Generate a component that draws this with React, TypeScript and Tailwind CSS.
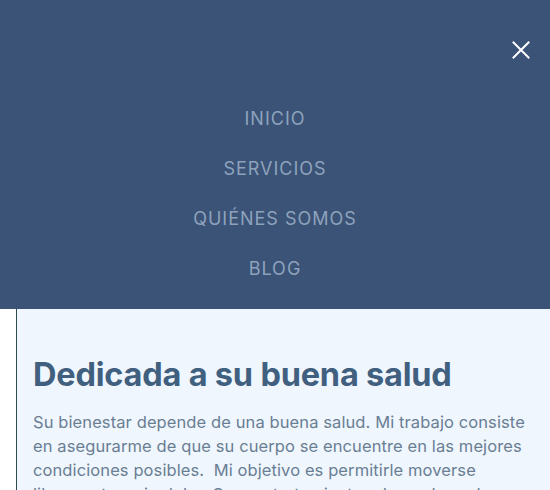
const links = ['INICIO', 'SERVICIOS', 'QUIÉNES SOMOS', 'BLOG'];

export default function App() {
  return (
    <div className="relative h-[490px] w-[550px] overflow-hidden bg-white font-['Inter',sans-serif]">
      {/* page content behind the menu */}
      <div className="ml-4 h-full border-l border-[#2f4a4c] bg-[#eff6fd] pt-[355px] pl-4 pr-4">
        <h1 className="text-[32.5px] leading-[40px] font-bold tracking-[-0.2px] text-[#41607f]">
          Dedicada a su buena salud
        </h1>
        <p className="mt-[15px] text-[16.5px] leading-[24px] tracking-[0.1px] text-[#6a7e94]">
          Su bienestar depende de una buena salud. Mi trabajo consiste en asegurarme de que su cuerpo se encuentre en las mejores condiciones posibles.&nbsp; Mi objetivo es permitirle moverse libremente y sin dolor. Con un tratamiento adecuado podemos lograrlo.
        </p>
      </div>

      {/* mobile menu overlay */}
      <nav className="absolute inset-x-0 top-0 h-[309px] bg-[#3a5377]">
        <button className="absolute right-[20px] top-[41px] text-white">
          <svg width="18" height="18" viewBox="0 0 18 18" fill="none" stroke="currentColor" strokeWidth="2" strokeLinecap="square">
            <path d="M1.5 1.5 16.5 16.5M16.5 1.5 1.5 16.5" />
          </svg>
        </button>
        <ul className="flex flex-col items-center gap-[26px] pt-[107px]">
          {links.map((l) => (
            <li key={l} className="text-[18px] leading-[24px] tracking-[1px] text-[#8ea2bc]">
              {l}
            </li>
          ))}
        </ul>
      </nav>
    </div>
  );
}
